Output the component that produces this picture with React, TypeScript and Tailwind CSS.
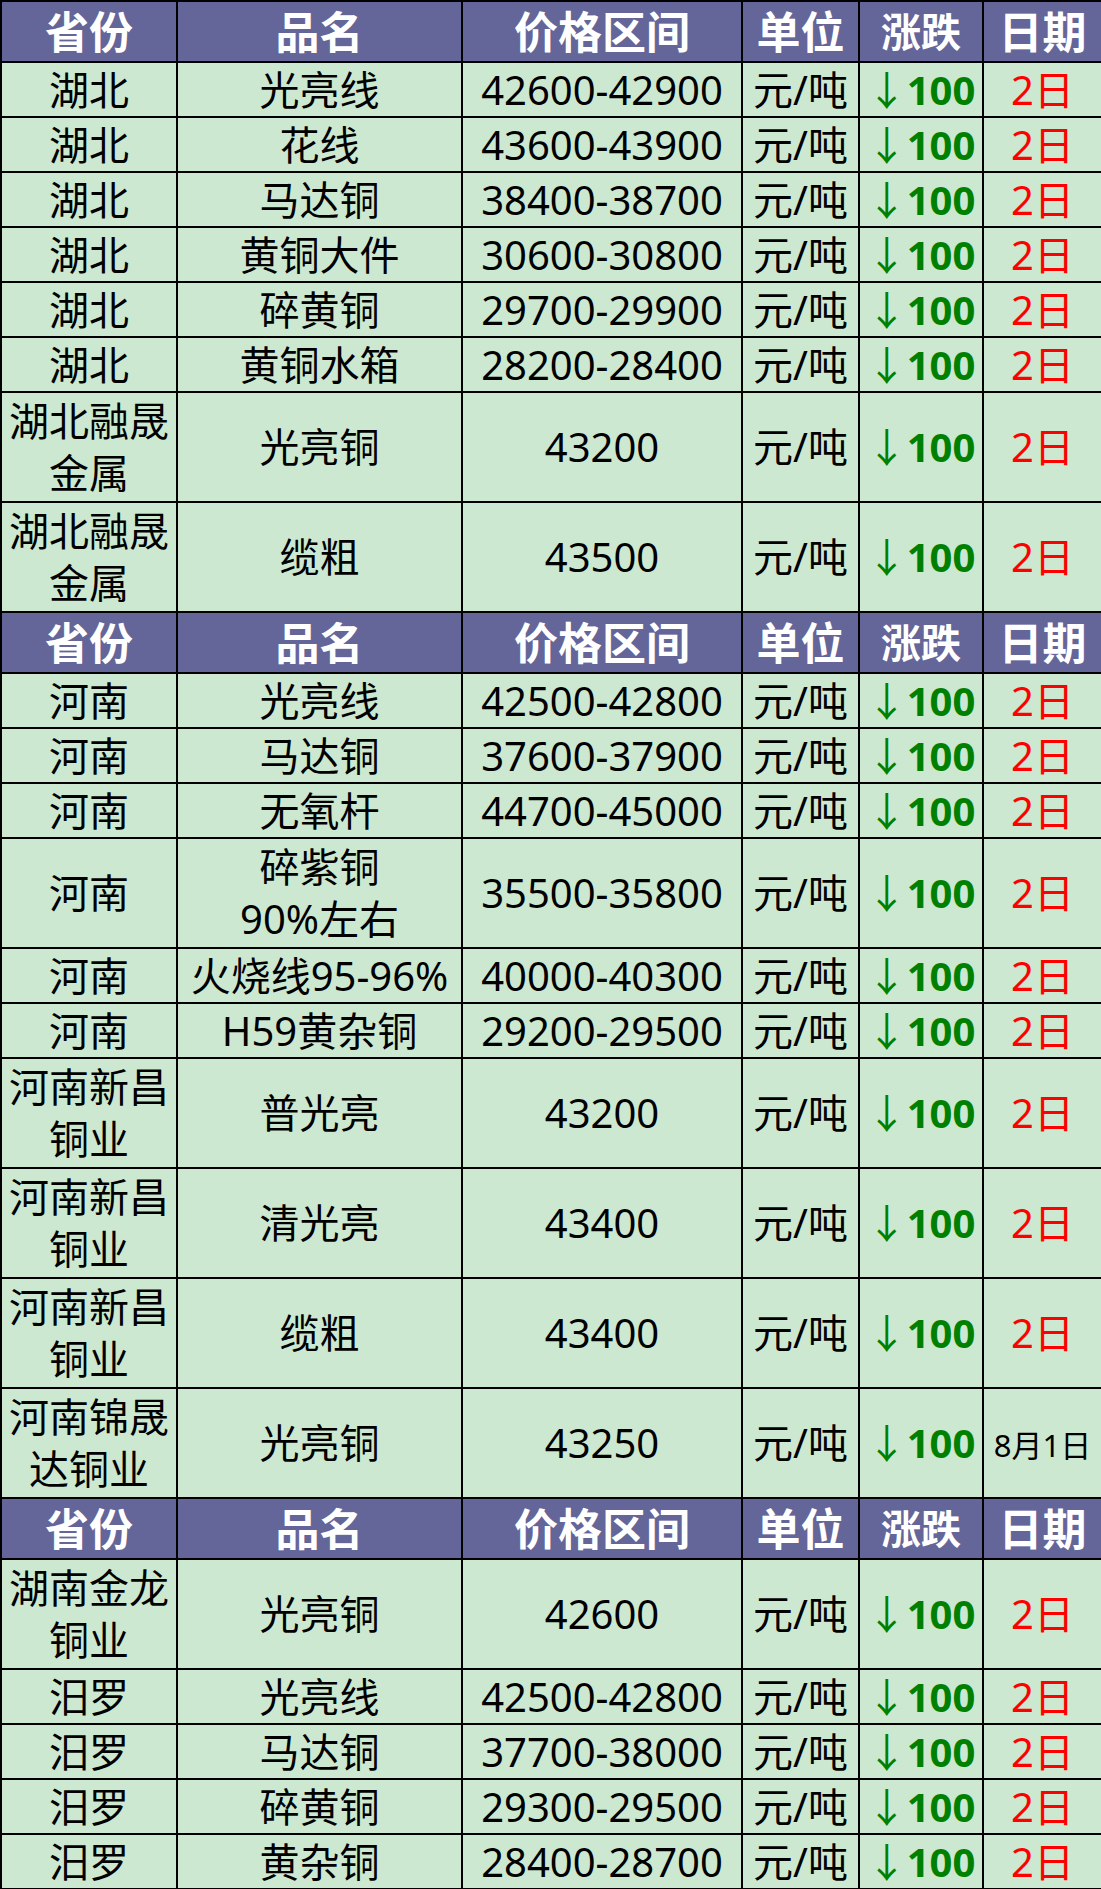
import { Fragment } from "react";

type Row = {
  region: string[];
  name: string[];
  price: string;
  date?: string;
};

const sections: Row[][] = [
  [
    { region: ["湖北"], name: ["光亮线"], price: "42600-42900" },
    { region: ["湖北"], name: ["花线"], price: "43600-43900" },
    { region: ["湖北"], name: ["马达铜"], price: "38400-38700" },
    { region: ["湖北"], name: ["黄铜大件"], price: "30600-30800" },
    { region: ["湖北"], name: ["碎黄铜"], price: "29700-29900" },
    { region: ["湖北"], name: ["黄铜水箱"], price: "28200-28400" },
    { region: ["湖北融晟", "金属"], name: ["光亮铜"], price: "43200" },
    { region: ["湖北融晟", "金属"], name: ["缆粗"], price: "43500" },
  ],
  [
    { region: ["河南"], name: ["光亮线"], price: "42500-42800" },
    { region: ["河南"], name: ["马达铜"], price: "37600-37900" },
    { region: ["河南"], name: ["无氧杆"], price: "44700-45000" },
    { region: ["河南"], name: ["碎紫铜", "90%左右"], price: "35500-35800" },
    { region: ["河南"], name: ["火烧线95-96%"], price: "40000-40300" },
    { region: ["河南"], name: ["H59黄杂铜"], price: "29200-29500" },
    { region: ["河南新昌", "铜业"], name: ["普光亮"], price: "43200" },
    { region: ["河南新昌", "铜业"], name: ["清光亮"], price: "43400" },
    { region: ["河南新昌", "铜业"], name: ["缆粗"], price: "43400" },
    { region: ["河南锦晟", "达铜业"], name: ["光亮铜"], price: "43250", date: "8月1日" },
  ],
  [
    { region: ["湖南金龙", "铜业"], name: ["光亮铜"], price: "42600" },
    { region: ["汨罗"], name: ["光亮线"], price: "42500-42800" },
    { region: ["汨罗"], name: ["马达铜"], price: "37700-38000" },
    { region: ["汨罗"], name: ["碎黄铜"], price: "29300-29500" },
    { region: ["汨罗"], name: ["黄杂铜"], price: "28400-28700" },
  ],
];

const Lines = ({ lines }: { lines: string[] }) => (
  <>
    {lines.map((l, i) => (
      <Fragment key={i}>
        {i > 0 && <br />}
        {l}
      </Fragment>
    ))}
  </>
);

const Header = () => (
  <tr className="h-[61px] bg-[#646598] text-white font-bold leading-[52px]">
    <th className="border-2 border-black text-[44px]">省份</th>
    <th className="border-2 border-black text-[44px]">品名</th>
    <th className="border-2 border-black text-[44px]">价格区间</th>
    <th className="border-2 border-black text-[44px]">单位</th>
    <th className="border-2 border-black text-[40px]">涨跌</th>
    <th className="border-2 border-black text-[44px]">日期</th>
  </tr>
);

export default function App() {
  return (
    <div className="w-[1101px] bg-white">
      <table
        className="w-[1101px] table-fixed border-collapse text-center text-black leading-[52px]"
        style={{ fontFamily: '"Noto Sans", "Noto Sans CJK SC", sans-serif' }}
      >
        <colgroup>
          <col className="w-[176px]" />
          <col className="w-[285px]" />
          <col className="w-[280px]" />
          <col className="w-[117px]" />
          <col className="w-[124px]" />
          <col className="w-[119px]" />
        </colgroup>
        <tbody>
          {sections.map((rows, s) => (
            <Fragment key={s}>
              <Header />
              {rows.map((r, i) => {
                const tall = r.region.length > 1 || r.name.length > 1;
                return (
                  <tr
                    key={i}
                    className={
                      tall
                        ? "h-[110px] bg-[#cde8d0] text-[40px]"
                        : "h-[55px] bg-[#cde8d0] text-[40px]"
                    }
                  >
                    <td className="border-2 border-black p-0">
                      <Lines lines={r.region} />
                    </td>
                    <td className="border-2 border-black p-0 whitespace-nowrap">
                      <Lines lines={r.name} />
                    </td>
                    <td className="border-2 border-black p-0">{r.price}</td>
                    <td className="border-2 border-black p-0 whitespace-nowrap">元/吨</td>
                    <td className="border-2 border-black p-0 text-[#008000] whitespace-nowrap">
                      <span className="font-normal">↓</span>
                      <span className="font-bold">100</span>
                    </td>
                    <td className="border-2 border-black p-0 whitespace-nowrap">
                      {r.date ? (
                        <span className="text-[31px] text-black">{r.date}</span>
                      ) : (
                        <span className="text-[#ff0000]">2日</span>
                      )}
                    </td>
                  </tr>
                );
              })}
            </Fragment>
          ))}
        </tbody>
      </table>
    </div>
  );
}
